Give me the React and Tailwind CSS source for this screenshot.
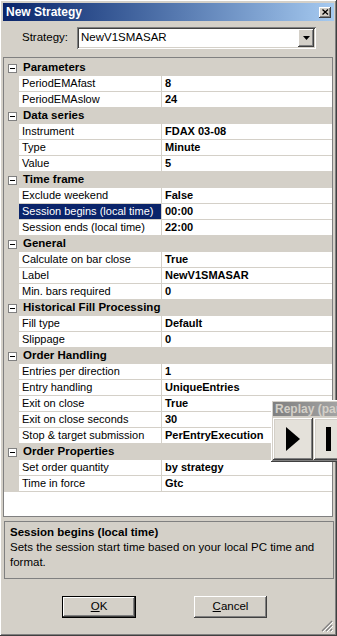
import React from 'react';

const sections = [
  { name: 'Parameters', rows: [['PeriodEMAfast', '8'], ['PeriodEMAslow', '24']] },
  { name: 'Data series', rows: [['Instrument', 'FDAX 03-08'], ['Type', 'Minute'], ['Value', '5']] },
  {
    name: 'Time frame',
    rows: [['Exclude weekend', 'False'], ['Session begins (local time)', '00:00', true], ['Session ends (local time)', '22:00']],
  },
  { name: 'General', rows: [['Calculate on bar close', 'True'], ['Label', 'NewV1SMASAR'], ['Min. bars required', '0']] },
  { name: 'Historical Fill Processing', rows: [['Fill type', 'Default'], ['Slippage', '0']] },
  {
    name: 'Order Handling',
    rows: [
      ['Entries per direction', '1'],
      ['Entry handling', 'UniqueEntries'],
      ['Exit on close', 'True'],
      ['Exit on close seconds', '30'],
      ['Stop & target submission', 'PerEntryExecution'],
    ],
  },
  { name: 'Order Properties', rows: [['Set order quantity', 'by strategy'], ['Time in force', 'Gtc']] },
];

const raised =
  'shadow-[inset_-1px_-1px_#404040,inset_1px_1px_#ffffff,inset_-2px_-2px_#808080,inset_2px_2px_#d4d0c8]';
const sunken =
  'shadow-[inset_1px_1px_#808080,inset_-1px_-1px_#ffffff,inset_2px_2px_#404040,inset_-2px_-2px_#d4d0c8]';

function MinusBox() {
  return (
    <div className="w-[9px] h-[9px] border border-[#808080] bg-white flex items-center justify-center">
      <div className="w-[5px] h-[1px] bg-black" />
    </div>
  );
}

function Section({ section }) {
  return (
    <>
      <div className="flex h-[16px] items-center bg-[#d4d0c8]">
        <div className="w-[15px] flex justify-center pl-[1px]">
          <MinusBox />
        </div>
        <span className="pl-[4px] font-bold text-[11.5px]">{section.name}</span>
      </div>
      {section.rows.map(([name, value, selected]) => (
        <div key={name} className="flex h-[16px]">
          <div className="w-[15px] bg-[#d4d0c8]" />
          <div
            className={`w-[142px] border-b border-[#d4d0c8] pl-[3px] leading-[15px] whitespace-nowrap overflow-hidden ${
              selected ? 'bg-[#0a246a] text-white' : 'bg-white'
            }`}
          >
            {name}
          </div>
          <div className="w-[1px] bg-[#d4d0c8]" />
          <div className="flex-1 bg-white border-b border-[#d4d0c8] pl-[3px] leading-[15px] font-bold whitespace-nowrap overflow-hidden">
            {value}
          </div>
        </div>
      ))}
    </>
  );
}

export default function App() {
  return (
    <div
      className={`relative w-[337px] h-[636px] overflow-hidden bg-[#d4d0c8] font-['Liberation_Sans',Arial,sans-serif] text-[11px] text-black p-[3px] flex flex-col ${raised}`}
    >
      {/* Title bar */}
      <div className="h-[18px] shrink-0 flex items-center justify-between bg-linear-to-r from-[#0a246a] to-[#a6caf0] pl-[3px] pr-[3px]">
        <span className="font-bold text-white text-[12px]">New Strategy</span>
        <div className={`w-[12px] h-[11px] bg-[#d4d0c8] flex items-center justify-center ${raised}`}>
          <svg width="7" height="6" viewBox="0 0 7 6">
            <path d="M0.5 0.5 L6 5.5 M6 0.5 L0.5 5.5" stroke="#000" strokeWidth="1.3" />
          </svg>
        </div>
      </div>

      {/* Strategy selector */}
      <div className="mt-[6px] h-[22px] shrink-0 flex items-center">
        <span className="w-[74px] pl-[19px] text-[11.5px]">Strategy:</span>
        <div className={`w-[239px] h-[22px] bg-white flex items-center justify-between p-[2px] ${sunken}`}>
          <span className="pl-[2px] text-[11.5px]">NewV1SMASAR</span>
          <div className={`w-[16px] h-[18px] bg-[#d4d0c8] flex items-center justify-center ${raised}`}>
            <svg width="7" height="4" viewBox="0 0 7 4">
              <path d="M0 0 H7 L3.5 4 Z" fill="#000" />
            </svg>
          </div>
        </div>
      </div>

      {/* Property grid */}
      <div className="mt-[8px] w-[330px] h-[460px] shrink-0 border border-[#808080] bg-white flex flex-col">
        <div className="h-[2px] bg-[#d4d0c8]" />
        {sections.map((s) => (
          <Section key={s.name} section={s} />
        ))}
        <div className="flex-1 bg-white" />
      </div>

      {/* Description */}
      <div className="mt-[4px] ml-[1px] w-[330px] h-[58px] shrink-0 border border-[#808080] pl-[5px] pr-[2px] pt-[3px]">
        <div className="font-bold text-[11.5px] leading-[15px]">Session begins (local time)</div>
        <div className="text-[11.5px] leading-[15px]">
          Sets the session start time based on your local PC time and format.
        </div>
      </div>

      {/* Buttons */}
      <div className="mt-[17px] h-[22px] shrink-0 flex">
        <div className="ml-[59px] w-[74px] h-[22px] border border-black">
          <div className={`w-full h-full flex items-center justify-center text-[11.5px] ${raised}`}>
            <span>
              <span className="underline">O</span>K
            </span>
          </div>
        </div>
        <div className={`ml-[58px] w-[73px] h-[22px] flex items-center justify-center text-[11.5px] ${raised}`}>
          <span>
            <span className="underline">C</span>ancel
          </span>
        </div>
      </div>

      {/* Resize grip */}
      <svg className="absolute right-[4px] bottom-[4px]" width="12" height="12" viewBox="0 0 12 12">
        <path d="M11 1 L1 11 M11 5 L5 11 M11 9 L9 11" stroke="#808080" strokeWidth="1.2" />
        <path d="M12 2 L2 12 M12 6 L6 12 M12 10 L10 12" stroke="#ffffff" strokeWidth="1" />
      </svg>

      {/* Replay window overlapping (extends past the dialog edge) */}
      <div className={`absolute left-[271px] top-[400px] w-[120px] h-[62px] bg-[#d4d0c8] p-[2px] ${raised}`}>
        <div className="h-[14px] bg-linear-to-r from-[#808080] to-[#c0c0c0] flex items-center pl-[2px] overflow-hidden">
          <span className="font-bold text-[12px] text-[#d4d0c8] whitespace-nowrap">Replay (paused)</span>
        </div>
        <div className="flex mt-[2px] gap-[1px]">
          <div className={`w-[40px] h-[42px] bg-[#e4e1da] flex items-center justify-center ${raised}`}>
            <svg width="14" height="24" viewBox="0 0 14 24">
              <path d="M0 0 L14 12 L0 24 Z" fill="#000" />
            </svg>
          </div>
          <div className={`w-[40px] h-[42px] bg-[#e4e1da] flex items-center pl-[12px] ${raised}`}>
            <div className="w-[5px] h-[24px] bg-black" />
          </div>
        </div>
      </div>
    </div>
  );
}
